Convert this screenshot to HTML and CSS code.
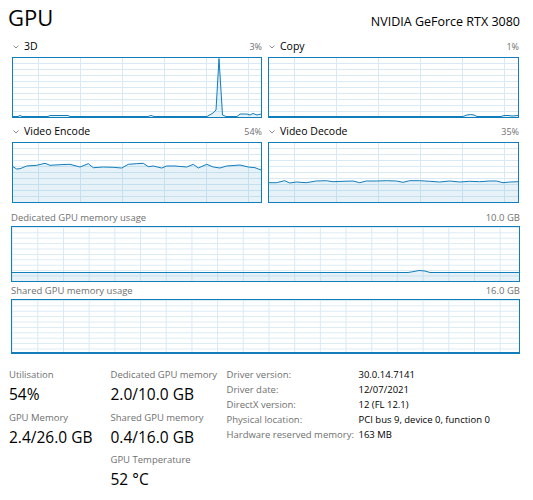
FILE: index.html
```html
<!DOCTYPE html>
<html>
<head>
    <meta charset="UTF-8">
    <title>GPU</title>
    <link rel="stylesheet" href="styles.css">
</head>
<body>
<div class="page">
    <div class="header">
        <div class="title">GPU</div>
        <div class="model">NVIDIA GeForce RTX 3080</div>
    </div>

    <!-- engine graphs -->
    <div class="engines">
        <div class="engine">
            <div class="engine-head">
                <span class="engine-name"><svg class="chevron" width="6" height="4"><polyline points="0.5,0.5 3,3 5.5,0.5"/></svg>3D</span>
                <span class="engine-value">3%</span>
            </div>
            <div class="graph">
                <svg viewBox="0 0 248 59" preserveAspectRatio="none">
                    <polygon class="area" points="0,58.5 5,58.5 7,57.5 9,58.5 35,58.5 37,57.5 55,57.5 57,58.5 135,58.5 138,57.5 141,58.5 194,58.5 200,55 203,52 206,0.5 209.5,57 213,58.5 224,58.5 227,56 234,56 237,57 240,55.5 244,57 248,56 248,59 0,59"/>
                    <polyline class="line" points="0,58.5 5,58.5 7,57.5 9,58.5 35,58.5 37,57.5 55,57.5 57,58.5 135,58.5 138,57.5 141,58.5 194,58.5 200,55 203,52 206,0.5 209.5,57 213,58.5 224,58.5 227,56 234,56 237,57 240,55.5 244,57 248,56"/>
                </svg>
            </div>
        </div>
        <div class="engine">
            <div class="engine-head">
                <span class="engine-name"><svg class="chevron" width="6" height="4"><polyline points="0.5,0.5 3,3 5.5,0.5"/></svg>Copy</span>
                <span class="engine-value">1%</span>
            </div>
            <div class="graph">
                <svg viewBox="0 0 249 59" preserveAspectRatio="none">
                    <polygon class="area" points="0,58.5 194,58.5 198,57 201.5,56.5 205,57 208,58.5 232,58.5 235,57.5 240,57.5 243,58 249,57.5 249,59 0,59"/>
                    <polyline class="line" points="0,58.5 194,58.5 198,57 201.5,56.5 205,57 208,58.5 232,58.5 235,57.5 240,57.5 243,58 249,57.5"/>
                </svg>
            </div>
        </div>
        <div class="engine">
            <div class="engine-head">
                <span class="engine-name"><svg class="chevron" width="6" height="4"><polyline points="0.5,0.5 3,3 5.5,0.5"/></svg>Video Encode</span>
                <span class="engine-value">54%</span>
            </div>
            <div class="graph">
                <svg viewBox="0 0 248 59" preserveAspectRatio="none">
                    <polygon class="area" points="0,23.7 3.7,26 7,25.7 13.7,23 23.7,22.3 32,20.3 37,22.3 47,21.7 57,21.3 67,24 75.3,20.7 80.3,24.7 90.3,24 100.3,24.3 108.7,25 115.3,21.3 123.7,20.7 130.3,20.3 135.3,23.7 140.3,23 148.7,25 153.7,23 162,23 173.7,24 180.3,21.3 185.3,25 193.7,21.3 200.3,24 207,25 213.7,23 227,22 235.3,24 242,24.7 248,27 248,59 0,59"/>
                    <polyline class="line" points="0,23.7 3.7,26 7,25.7 13.7,23 23.7,22.3 32,20.3 37,22.3 47,21.7 57,21.3 67,24 75.3,20.7 80.3,24.7 90.3,24 100.3,24.3 108.7,25 115.3,21.3 123.7,20.7 130.3,20.3 135.3,23.7 140.3,23 148.7,25 153.7,23 162,23 173.7,24 180.3,21.3 185.3,25 193.7,21.3 200.3,24 207,25 213.7,23 227,22 235.3,24 242,24.7 248,27"/>
                </svg>
            </div>
        </div>
        <div class="engine">
            <div class="engine-head">
                <span class="engine-name"><svg class="chevron" width="6" height="4"><polyline points="0.5,0.5 3,3 5.5,0.5"/></svg>Video Decode</span>
                <span class="engine-value">35%</span>
            </div>
            <div class="graph">
                <svg viewBox="0 0 249 59" preserveAspectRatio="none">
                    <polygon class="area" points="0,39.7 7.3,39.7 15.7,37.7 20.7,40 27.3,39 37.3,39.7 47.3,38 57.3,37.7 64,38.7 74,38.3 84,38 90.7,39.7 97.3,38 107.3,38 117.3,37.7 127.3,38 134,39.3 140.7,37.7 150.7,37.7 160.7,38.3 170.7,39 180.7,38 190.7,39 200.7,38.3 210.7,38.7 220.7,38 227.3,38 234,39.7 240.7,39 249,38.7 249,59 0,59"/>
                    <polyline class="line" points="0,39.7 7.3,39.7 15.7,37.7 20.7,40 27.3,39 37.3,39.7 47.3,38 57.3,37.7 64,38.7 74,38.3 84,38 90.7,39.7 97.3,38 107.3,38 117.3,37.7 127.3,38 134,39.3 140.7,37.7 150.7,37.7 160.7,38.3 170.7,39 180.7,38 190.7,39 200.7,38.3 210.7,38.7 220.7,38 227.3,38 234,39.7 240.7,39 249,38.7"/>
                </svg>
            </div>
        </div>
    </div>

    <!-- memory graphs -->
    <div class="mem-head">
        <span>Dedicated GPU memory usage</span>
        <span>10.0 GB</span>
    </div>
    <div class="graph mem-graph">
        <svg viewBox="0 0 507 54" preserveAspectRatio="none">
            <polygon class="area" points="0,45.5 396,45.5 402,44.5 407,43.5 413,44 418,45.5 507,45.5 507,54 0,54"/>
            <polyline class="line" points="0,45.5 396,45.5 402,44.5 407,43.5 413,44 418,45.5 507,45.5"/>
        </svg>
    </div>
    <div class="mem-head">
        <span>Shared GPU memory usage</span>
        <span>16.0 GB</span>
    </div>
    <div class="graph mem-graph shared">
        <svg viewBox="0 0 507 53" preserveAspectRatio="none">
            <polyline class="line" points="0,52.5 507,52.5"/>
        </svg>
    </div>

    <!-- numbers -->
    <div class="stats">
        <div class="stat-col">
            <div class="stat">
                <div class="stat-label">Utilisation</div>
                <div class="stat-value">54%</div>
            </div>
            <div class="stat">
                <div class="stat-label">GPU Memory</div>
                <div class="stat-value">2.4/26.0 GB</div>
            </div>
        </div>
        <div class="stat-col">
            <div class="stat">
                <div class="stat-label">Dedicated GPU memory</div>
                <div class="stat-value">2.0/10.0 GB</div>
            </div>
            <div class="stat">
                <div class="stat-label">Shared GPU memory</div>
                <div class="stat-value">0.4/16.0 GB</div>
            </div>
            <div class="stat">
                <div class="stat-label">GPU Temperature</div>
                <div class="stat-value">52 °C</div>
            </div>
        </div>
        <div class="info">
            <span class="info-label">Driver version:</span><span>30.0.14.7141</span>
            <span class="info-label">Driver date:</span><span>12/07/2021</span>
            <span class="info-label">DirectX version:</span><span>12 (FL 12.1)</span>
            <span class="info-label">Physical location:</span><span>PCI bus 9, device 0, function 0</span>
            <span class="info-label">Hardware reserved memory:</span><span>163 MB</span>
        </div>
    </div>
</div>
</body>
</html>
```

FILE: styles.css
```css
body {
    margin: 0;
    background-color: #ffffff;
    font-family: "Open Sans", "Noto Sans", sans-serif;
    color: #000000;
}

.page {
    margin-left: 11px;
    width: 509px;
}

.header {
    display: flex;
    justify-content: space-between;
    align-items: baseline;
    height: 36px;
}
.title {
    font-size: 22px;
    line-height: 35px;
    margin-left: -3px;
}
.model {
    font-size: 12.5px;
}

.engines {
    display: grid;
    grid-template-columns: 250px 251px;
    column-gap: 6px;
    row-gap: 3px;
    margin-left: 1px;
}
.engine-head {
    display: flex;
    justify-content: space-between;
    align-items: baseline;
    height: 21px;
    line-height: 21px;
}
.engine-name {
    font-size: 10.5px;
}
.engine-value {
    font-size: 9px;
    color: #707070;
}
.chevron {
    margin: 0 5px 1px 1px;
    vertical-align: middle;
}
.chevron polyline {
    fill: none;
    stroke: #8a8a8a;
    stroke-width: 1;
}

.graph {
    box-sizing: border-box;
    height: 61px;
    border: 1px solid #117dbb;
    background-color: #ffffff;
    background-image:
        linear-gradient(to right, #d9eaf4 1px, transparent 1px),
        linear-gradient(to bottom, #d9eaf4 1px, transparent 1px);
    background-size: 42px 100%, 100% 6px;
    background-position: 25px 0, 0 5px;
}
.graph svg {
    display: block;
    width: 100%;
    height: 100%;
}
.graph .line {
    fill: none;
    stroke: #117dbb;
    stroke-width: 1;
    vector-effect: non-scaling-stroke;
}
.graph .area {
    fill: rgba(17, 125, 187, 0.1);
    stroke: none;
}

.mem-head {
    display: flex;
    justify-content: space-between;
    height: 17px;
    line-height: 17px;
    font-size: 9.5px;
    color: #707070;
}
.engines + .mem-head {
    margin-top: 6px;
}
.mem-graph {
    height: 56px;
    background-size: 25.7px 100%, 100% 5.4px;
    background-position: 25.3px 0, 0 5.4px;
}
.mem-graph.shared {
    height: 55px;
}

.stats {
    display: grid;
    grid-template-columns: 101.5px 116px 1fr;
    margin: 13px 0 0 -2px;
}
.stat {
    margin-bottom: 3.5px;
}
.stat-label {
    font-size: 9.5px;
    line-height: 16px;
    color: #707070;
}
.stat-value {
    font-size: 15.5px;
    line-height: 23px;
}
.info {
    display: grid;
    grid-template-columns: 132px 1fr;
    font-size: 9.5px;
    line-height: 15px;
    align-content: start;
}
.info-label {
    color: #707070;
}
```
